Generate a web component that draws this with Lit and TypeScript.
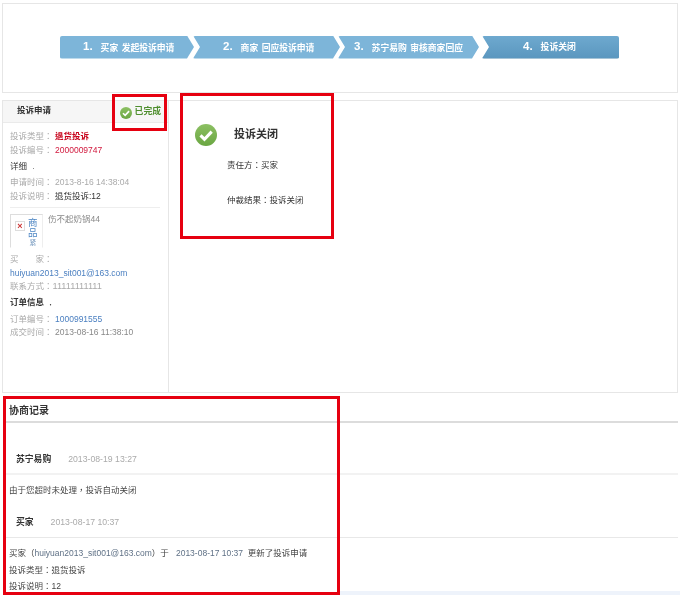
import { LitElement, html, css, svg } from "lit";
import { customElement } from "lit/decorators.js";

const check = (size: number) => html`<svg class="check" width=${size} height=${size} viewBox="0 0 24 24">
  <defs><linearGradient id="g${size}" x1="0" y1="0" x2="0" y2="1"><stop offset="0" stop-color="#8cc063"/><stop offset="1" stop-color="#6aa642"/></linearGradient></defs>
  <circle cx="12" cy="12" r="12" fill="url(#g${size})"/>
  ${svg`<path d="M6 12.5 L10.3 16.6 L18.2 8.4" fill="none" stroke="#fff" stroke-width="3.4"/>`}
</svg>`;

@customElement("app-root")
export class AppRoot extends LitElement {
  static styles = css`
    :host { display: block; width: 680px; height: 595px; position: relative; overflow: hidden; background: #fff;
      font-family: "Liberation Sans", "Noto Sans CJK TC", sans-serif; font-size: 8.5px; color: #333; line-height: 1.2; filter: blur(0.35px); }
    .stepbox { margin: 3px 2px 0; height: 90px; box-sizing: border-box; border: 1px solid #e6e6e6; display: flex; align-items: center; padding: 0 0 0 57px; }
    .steps { display: flex; height: 23px; margin-top: -2px; }
    .step { display: flex; align-items: center; gap: 8px; color: #fff; font-weight: bold; font-size: 8.8px; word-spacing: 1px; background: #7db5d9; height: 100%; box-sizing: border-box; white-space: nowrap; border-radius: 2px; }
    .step b { font-size: 11.5px; font-weight: bold; }
    .step span { margin-top: 2px; }
    .s1 { width: 134px; padding-left: 23px; clip-path: polygon(0 0, 127px 0, 100% 50%, 127px 100%, 0 100%); }
    .s2 { width: 147px; margin-left: -1px; padding-left: 30px; clip-path: polygon(0 0, 140px 0, 100% 50%, 140px 100%, 0 100%, 7px 50%); }
    .s3 { width: 141px; margin-left: -2px; padding-left: 16px; clip-path: polygon(0 0, 134px 0, 100% 50%, 134px 100%, 0 100%, 7px 50%); }
    .s4 { width: 137px; margin-left: 3px; padding-left: 41px; background: linear-gradient(#6ea9cf, #5b97bf); clip-path: polygon(0 0, 100% 0, 100% 100%, 0 100%, 7px 50%); border-bottom: 1px solid #4d87ad; }

    .main { margin: 7px 2px 0; height: 293px; box-sizing: border-box; border: 1px solid #e6e6e6; display: flex; }
    .left { width: 165px; border-right: 1px solid #e6e6e6; }
    .lhead { height: 22px; background: #f6f6f6; border-bottom: 1px solid #eaeaea; display: flex; align-items: center; justify-content: space-between; padding: 0 6px 3px 14px; box-sizing: border-box; font-weight: bold; color: #333; font-size: 8.5px; }
    .done { display: flex; align-items: flex-start; gap: 3px; color: #4f8f2f; font-size: 8.8px; padding-top: 4px; padding-right: 1px; }
    .done svg { margin-top: 1px; }
    .lbody { padding: 0 8px 0 7px; color: #aaa; }
    .row { height: 14px; display: flex; align-items: center; white-space: nowrap; }
    .r-first { margin-top: 6px; }
    .r-sub { margin-top: 2px; }
    .r-one { margin-top: 1px; }
    .r-three { margin-top: 3px; }
    .r-tight { margin-top: -1px; }
    .lab { color: #aaa; width: 45px; flex: none; }
    .red { color: #c70019; font-weight: bold; }
    .crim { color: #d1173c; }
    .blk { color: #333; }
    .blue { color: #4a7fc0; }
    .val { color: #888; }
    .dark { color: #333; }
    .bold { font-weight: bold; color: #333; }
    .ones { font-size: 9.2px; }
    .divider { border-top: 1px solid #eee; margin-top: 4px; }
    .prod { display: flex; margin-top: 6px; height: 36px; gap: 5px; color: #888; }
    .thumb { width: 33px; height: 34px; box-sizing: border-box; border: 1px solid #ddd; border-right-color: #eee; border-bottom: 1px solid #fff; display: flex; gap: 3px; padding: 3px 0 0 4px; flex: none; }
    .x { width: 10px; height: 10px; margin-top: 3px; flex: none; border: 1px solid #ddd; box-sizing: border-box; color: #c33; font: bold 9px/8px "Liberation Sans", sans-serif; text-align: center; }
    .vt { display: flex; flex-direction: column; align-items: center; font-size: 9.5px; line-height: 10px; color: #4d86c4; }
    .vt i { font-style: normal; font-size: 7px; color: #7a9cc0; line-height: 9px; }

    .right { flex: 1; }
    .res { padding: 23px 0 0 26px; width: 150px; color: #333; font-size: 8.5px; }
    .res-h { display: flex; align-items: center; gap: 17px; font-size: 11px; font-weight: bold; color: #333; }
    .res p { margin: 0; padding-left: 32px; }
    .p1 { margin-top: 14px !important; }
    .p2 { margin-top: 25px !important; }

    .rec { margin: 4px 2px 0 3px; }
    .rec h3 { margin: 0; height: 26px; display: flex; align-items: center; font-size: 10px; padding: 3px 0 0 6px; color: #333; border-bottom: 2px solid #dcdcdc; box-sizing: border-box; }
    .who { display: flex; align-items: center; padding-left: 13px; border-bottom: 1px solid #eee; box-sizing: border-box; gap: 17px; }
    .who b { color: #333; font-size: 8.8px; }
    .who span { color: #aaa; font-size: 8.7px; }
    .w1 { margin-top: 23px; height: 29px; border-bottom-width: 2px; border-bottom-color: #f2f2f2; }
    .w2 { margin-top: 8.5px; border-bottom-color: #e8e8e8; height: 31px; }
    .line { height: 16.5px; line-height: 16.5px; padding-left: 6px; font-size: 8.5px; color: #444; white-space: pre; }
    .l0 { margin-top: 7px; }
    .line .g { color: #5f7186; }

    .foot { position: absolute; left: 340px; right: 0; bottom: 0; height: 4px; background: #eef3fb; }
    .mark { position: absolute; border: 3px solid #e60010; box-sizing: border-box; pointer-events: none; }
    .m1 { left: 112px; top: 94px; width: 55px; height: 37px; }
    .m2 { left: 180px; top: 93px; width: 154px; height: 146px; }
    .m3 { left: 3px; top: 396px; width: 337px; height: 199px; }
  `;

  render() {
    return html`
      <div class="stepbox">
        <div class="steps">
          <div class="step s1"><b>1.</b><span>买家 发起投诉申请</span></div>
          <div class="step s2"><b>2.</b><span>商家 回应投诉申请</span></div>
          <div class="step s3"><b>3.</b><span>苏宁易购 审核商家回应</span></div>
          <div class="step s4"><b>4.</b><span>投诉关闭</span></div>
        </div>
      </div>
      <div class="main">
        <div class="left">
          <div class="lhead"><span>投诉申请</span><span class="done">${check(12)}已完成</span></div>
          <div class="lbody">
            <div class="row r-first"><span class="lab">投诉类型：</span><span class="red">退货投诉</span></div>
            <div class="row"><span class="lab">投诉编号：</span><span class="crim">2000009747</span></div>
            <div class="row r-sub dark">详细 ﹒</div>
            <div class="row r-sub"><span class="lab">申请时间：</span><span>2013-8-16 14:38:04</span></div>
            <div class="row"><span class="lab">投诉说明：</span><span class="blk">退货投诉:12</span></div>
            <div class="divider"></div>
            <div class="prod">
              <div class="thumb"><div class="x">×</div><div class="vt"><span>商</span><span>品</span><i>紧</i></div></div>
              <span>伤不起奶锅44</span>
            </div>
            <div class="row r-sub">买　　家：</div>
            <div class="row blue">huiyuan2013_sit001@163.com</div>
            <div class="row"><span>联系方式：<span class="ones">11111111111</span></span></div>
            <div class="row r-one bold">订单信息 ﹒</div>
            <div class="row r-three"><span class="lab">订单编号：</span><span class="blue">1000991555</span></div>
            <div class="row r-tight"><span class="lab">成交时间：</span><span class="val">2013-08-16 11:38:10</span></div>
          </div>
        </div>
        <div class="right">
          <div class="res">
            <div class="res-h">${check(22)}<span>投诉关闭</span></div>
            <p class="p1">责任方：买家</p>
            <p class="p2">仲裁结果：投诉关闭</p>
          </div>
        </div>
      </div>
      <div class="rec">
        <h3>协商记录</h3>
        <div class="who w1"><b>苏宁易购</b><span>2013-08-19 13:27</span></div>
        <div class="line l0">由于您超时未处理，投诉自动关闭</div>
        <div class="who w2"><b>买家</b><span>2013-08-17 10:37</span></div>
        <div class="line l0">买家（<span class="g">huiyuan2013_sit001@163.com</span>）于   <span class="g">2013-08-17 10:37</span>  更新了投诉申请</div>
        <div class="line">投诉类型：退货投诉</div>
        <div class="line">投诉说明：12</div>
      </div>
      <div class="foot"></div>
      <div class="mark m1"></div>
      <div class="mark m2"></div>
      <div class="mark m3"></div>
    `;
  }
}
